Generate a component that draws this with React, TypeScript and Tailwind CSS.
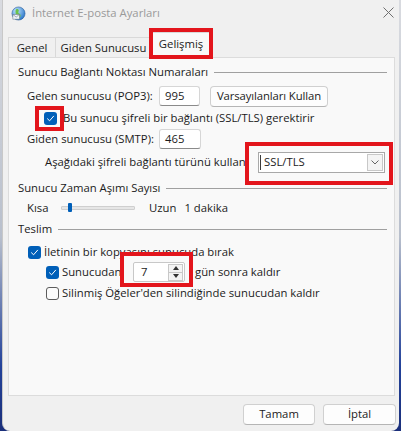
import React from "react";

const RED = "border-[#e3151c]";

function Check({ checked }: { checked: boolean }) {
  return checked ? (
    <span className="flex h-[13px] w-[13px] shrink-0 items-center justify-center rounded-[3px] bg-[#005fb8]">
      <svg width="9" height="9" viewBox="0 0 9 9" fill="none">
        <path d="M1.5 4.8 L3.6 6.8 L7.6 2.2" stroke="white" strokeWidth="1" strokeLinecap="round" strokeLinejoin="round" />
      </svg>
    </span>
  ) : (
    <span className="h-[13px] w-[13px] shrink-0 rounded-[3px] border border-[#5c5c5c] bg-[#fbfbfb]" />
  );
}

function Header({ text }: { text: string }) {
  return (
    <div className="flex h-[16px] items-center">
      <span>{text}</span>
      <div className="ml-[6px] mt-[1px] h-px flex-1 bg-[#a0a0a0]" />
    </div>
  );
}

function Input({ value, w }: { value: string; w: string }) {
  return (
    <div className={`flex h-[20px] items-center rounded-[3px] border border-[#d6d6d6] border-b-[#8a8a8a] bg-white pl-[5px] ${w}`}>
      {value}
    </div>
  );
}

export default function App() {
  return (
    <div
      className="h-[431px] w-[401px] overflow-hidden whitespace-nowrap bg-[linear-gradient(180deg,#d9dbe0_0%,#b8bfcc_55%,#23429a_85%,#1b2f7a_100%)] text-[11.3px] text-[#1b1b1b]"
      style={{ fontFamily: '"Open Sans", "Noto Sans", sans-serif' }}
    >
      <div className="ml-[2px] flex h-[431px] w-[397px] flex-col rounded-bl-[8px] rounded-br-[8px] border-l border-[#c8c8c8] bg-[#f0f0f0]">
        {/* Title bar */}
        <div className="flex h-[27px] items-center">
          <svg className="ml-[8px]" width="15" height="15" viewBox="0 0 16 16">
            <defs>
              <radialGradient id="g" cx="0.35" cy="0.3" r="0.8">
                <stop offset="0" stopColor="#bfe3ff" />
                <stop offset="1" stopColor="#1f6fc4" />
              </radialGradient>
            </defs>
            <circle cx="8" cy="8" r="7" fill="url(#g)" stroke="#2a5d9c" strokeWidth="0.6" />
            <path d="M6 3 C8 3 9 5 8 6 C7 7 9 8 10 9 C11 11 9 13 8 13 C7 11 5 10 5 8 C5 6 4 5 6 3Z" fill="#6cc24a" />
            <rect x="2" y="9" width="7" height="5" fill="#eef3f8" stroke="#6c7a89" strokeWidth="0.6" />
            <path d="M2 9 L5.5 11.8 L9 9" fill="none" stroke="#6c7a89" strokeWidth="0.6" />
          </svg>
          <span className="ml-[6px] text-[11.3px] text-[#9a9a9a]">İnternet E-posta Ayarları</span>
          <div className="flex-1" />
          <svg className="mr-[5px] mt-[-2px]" width="11" height="11" viewBox="0 0 11 11">
            <path d="M0.5 0.5 L10.5 10.5 M10.5 0.5 L0.5 10.5" stroke="#6f6f6f" strokeWidth="1" />
          </svg>
        </div>

        {/* Tabs */}
        <div className="relative z-10 ml-[5px] flex h-[30px] items-end">
          <div className="flex h-[20px] w-[48px] items-center justify-center border border-b-0 border-[#d9d9d9] bg-[#f0f0f0] pt-[1px]">
            Genel
          </div>
          <div className="flex h-[20px] w-[96px] items-center justify-center border border-b-0 border-l-0 border-[#d9d9d9] bg-[#f0f0f0] pt-[1px]">
            Giden Sunucusu
          </div>
          <div className="relative mb-[-1px] flex h-[26px] w-[58px] items-start justify-center border border-b-0 border-[#d9d9d9] bg-[#f9f9f9] pt-[3px]">
            Gelişmiş
            <div className={`absolute left-[-4px] right-[-4px] top-[-5px] bottom-[-1px] border-[4px] ${RED}`} />
          </div>
        </div>

        {/* Panel */}
        <div className="ml-[5px] flex h-[339px] w-[387px] flex-col border border-[#dcdcdc] bg-[#f9f9f9] pl-[9px] pr-[7px]">
          <div className="mt-[6px]">
            <Header text="Sunucu Bağlantı Noktası Numaraları" />
          </div>

          <div className="mt-[5px] flex h-[22px] items-center pl-[9px]">
            <span className="w-[132px]">Gelen sunucusu (POP3):</span>
            <Input value="995" w="w-[41px]" />
            <div className="ml-[10px] flex h-[21px] w-[118px] items-center justify-center rounded-[4px] border border-[#d0d0d0] border-b-[#b5b5b5] bg-[#fdfdfd] tracking-[-0.1px]">
              Varsayılanları Kullan
            </div>
          </div>

          <div className="flex h-[22px] items-center pl-[26px]">
            <div className="relative flex">
              <Check checked />
              <div className={`absolute left-[-9px] right-[-7px] top-[-6px] bottom-[-6px] border-[4px] ${RED}`} />
            </div>
            <span className="ml-[6px]">Bu sunucu şifreli bir bağlantı (SSL/TLS) gerektirir</span>
          </div>

          <div className="flex h-[20px] items-center pl-[9px]">
            <span className="w-[132px]">Giden sunucusu (SMTP):</span>
            <Input value="465" w="w-[42px]" />
          </div>

          <div className="mt-[2px] flex h-[22px] items-center pl-[27px]">
            <span className="w-[213px]">Aşağıdaki şifreli bağlantı türünü kullan:</span>
            <div className="relative">
              <div className="flex h-[21px] w-[127px] items-center border border-[#a8a8a8] bg-white pl-[1px]">
                <div className="h-[15px] w-px bg-[#3c3c3c]" />
                <span className="ml-[3px] flex-1">SSL/TLS</span>
                <div className="mr-[1px] flex h-[17px] w-[16px] items-center justify-center border border-[#c8c8c8] bg-[#f4f4f4]">
                  <svg width="8" height="5" viewBox="0 0 8 5">
                    <path d="M0.5 0.5 L4 4 L7.5 0.5" fill="none" stroke="#555" strokeWidth="0.9" />
                  </svg>
                </div>
              </div>
              <div className={`absolute left-[-13px] right-[-8px] top-[-10px] bottom-[-12px] border-[4px] ${RED}`} />
            </div>
          </div>

          <div className="mt-[7px]">
            <Header text="Sunucu Zaman Aşımı Sayısı" />
          </div>

          <div className="mt-[4px] flex h-[16px] items-center pl-[9px]">
            <span className="w-[34px]">Kısa</span>
            <div className="relative h-[4px] w-[74px] rounded-[1px] border border-[#cfcfcf] bg-[#e6e6e6]">
              <div className="absolute left-[6px] top-[-4px] h-[9px] w-[4px] rounded-[1px] bg-[#005fb8]" />
            </div>
            <span className="ml-[14px]">Uzun</span>
            <span className="ml-[8px]">1 dakika</span>
          </div>

          <div className="mt-[5px]">
            <Header text="Teslim" />
          </div>

          <div className="mt-[7px] flex h-[16px] items-center pl-[10px]">
            <Check checked />
            <span className="ml-[3px]">İletinin bir kopyasını sunucuda bırak</span>
          </div>

          <div className="mt-[2px] flex h-[20px] items-center pl-[28px]">
            <Check checked />
            <span className="ml-[3px] w-[71px]">Sunucudan</span>
            <div className="relative">
              <div className="flex h-[20px] w-[52px] items-center rounded-[2px] border border-[#c8c8c8] bg-white pl-[7px]">
                <span className="flex-1">7</span>
                <div className="mr-[1px] flex h-[17px] w-[15px] flex-col border border-[#c8c8c8] bg-[#f4f4f4]">
                  <div className="flex flex-1 items-center justify-center border-b border-[#c8c8c8]">
                    <svg width="6" height="4" viewBox="0 0 6 4"><path d="M0 4 L3 0 L6 4Z" fill="#333" /></svg>
                  </div>
                  <div className="flex flex-1 items-center justify-center">
                    <svg width="6" height="4" viewBox="0 0 6 4"><path d="M0 0 L3 4 L6 0Z" fill="#333" /></svg>
                  </div>
                </div>
              </div>
              <div className={`absolute left-[-13px] right-[-8px] top-[-10px] bottom-[-5px] border-[4px] ${RED}`} />
            </div>
            <span className="ml-[10px]">gün sonra kaldır</span>
          </div>

          <div className="mt-[3px] flex h-[16px] items-center pl-[28px]">
            <Check checked={false} />
            <span className="ml-[3px]">Silinmiş Öğeler'den silindiğinde sunucudan kaldır</span>
          </div>
        </div>

        {/* Buttons */}
        <div className="mt-[8px] flex justify-end gap-[8px] pr-[3px]">
          <div className="flex h-[21px] w-[72px] items-center justify-center rounded-[4px] border border-[#d0d0d0] border-b-[#b5b5b5] bg-[#fdfdfd]">
            Tamam
          </div>
          <div className="flex h-[21px] w-[73px] items-center justify-center rounded-[4px] border border-[#d0d0d0] border-b-[#b5b5b5] bg-[#fdfdfd]">
            İptal
          </div>
        </div>
      </div>
    </div>
  );
}
